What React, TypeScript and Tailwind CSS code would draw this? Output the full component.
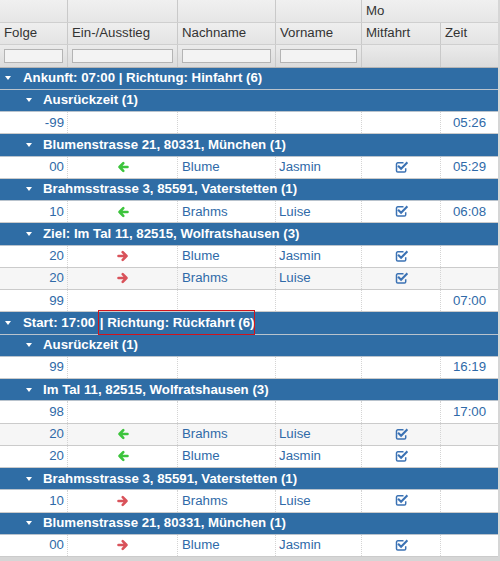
type Row =
  | { kind: "group"; level: 1 | 2; label: React.ReactNode }
  | {
      kind: "data";
      folge: string;
      dir?: "in" | "out";
      nach?: string;
      vor?: string;
      mit?: boolean;
      zeit?: string;
      odd?: boolean;
    };

const COLS = "grid-cols-[68px_110px_98px_86px_79px_57px]";

const rows: Row[] = [
  { kind: "group", level: 1, label: "Ankunft: 07:00 | Richtung: Hinfahrt (6)" },
  { kind: "group", level: 2, label: "Ausrückzeit (1)" },
  { kind: "data", folge: "-99", zeit: "05:26" },
  { kind: "group", level: 2, label: "Blumenstrasse 21, 80331, München (1)" },
  { kind: "data", folge: "00", dir: "in", nach: "Blume", vor: "Jasmin", mit: true, zeit: "05:29" },
  { kind: "group", level: 2, label: "Brahmsstrasse 3, 85591, Vaterstetten (1)" },
  { kind: "data", folge: "10", dir: "in", nach: "Brahms", vor: "Luise", mit: true, zeit: "06:08" },
  { kind: "group", level: 2, label: "Ziel: Im Tal 11, 82515, Wolfratshausen (3)" },
  { kind: "data", folge: "20", dir: "out", nach: "Blume", vor: "Jasmin", mit: true },
  { kind: "data", folge: "20", dir: "out", nach: "Brahms", vor: "Luise", mit: true, odd: true },
  { kind: "data", folge: "99", zeit: "07:00" },
  {
    kind: "group",
    level: 1,
    label: (
      <>
        <span className="whitespace-pre">Start: 17:00 </span>
        <span className="relative z-10 flex h-[23px] items-center whitespace-pre pl-[1px] ring-1 ring-[#d0141c]">
          | Richtung: Rückfahrt (6)
        </span>
      </>
    ),
  },
  { kind: "group", level: 2, label: "Ausrückzeit (1)" },
  { kind: "data", folge: "99", zeit: "16:19" },
  { kind: "group", level: 2, label: "Im Tal 11, 82515, Wolfratshausen (3)" },
  { kind: "data", folge: "98", zeit: "17:00" },
  { kind: "data", folge: "20", dir: "in", nach: "Brahms", vor: "Luise", mit: true, odd: true },
  { kind: "data", folge: "20", dir: "in", nach: "Blume", vor: "Jasmin", mit: true },
  { kind: "group", level: 2, label: "Brahmsstrasse 3, 85591, Vaterstetten (1)" },
  { kind: "data", folge: "10", dir: "out", nach: "Brahms", vor: "Luise", mit: true },
  { kind: "group", level: 2, label: "Blumenstrasse 21, 80331, München (1)" },
  { kind: "data", folge: "00", dir: "out", nach: "Blume", vor: "Jasmin", mit: true },
];

function Caret() {
  return (
    <span className="h-0 w-0 shrink-0 border-x-[3px] border-t-[4px] border-x-transparent border-t-white" />
  );
}

function Arrow({ dir }: { dir: "in" | "out" }) {
  return (
    <svg
      width="12"
      height="12"
      viewBox="0 0 12 12"
      className={dir === "in" ? "text-[#3cc43c]" : "-scale-x-100 text-[#d9525a]"}
      fill="none"
      stroke="currentColor"
      strokeWidth="2.6"
      strokeLinecap="round"
      strokeLinejoin="round"
    >
      <path d="M10.5 6H2.5M6.3 2.2L2.5 6l3.8 3.8" />
    </svg>
  );
}

function Check() {
  return (
    <svg width="13" height="12" viewBox="0 0 13 12" fill="none" stroke="#3b72b4" className="mb-[1px]">
      <path
        d="M8.5 1.8H2.8a1.3 1.3 0 0 0-1.3 1.3v6.6a1.3 1.3 0 0 0 1.3 1.3h6.6a1.3 1.3 0 0 0 1.3-1.3V7.3"
        strokeWidth="1.5"
      />
      <path d="M3.8 5.4l2.3 2.3 5.6-5.6" strokeWidth="2.1" strokeLinecap="square" />
    </svg>
  );
}

function GroupRow({ level, label }: { level: 1 | 2; label: React.ReactNode }) {
  return (
    <div
      className={`flex h-[22.25px] items-center border-b border-[#b9c3cd] bg-[#2f6da5] text-[13.25px] font-bold text-white ${
        level === 1 ? "gap-[12px] pl-[5px]" : "gap-[11px] pl-[26px]"
      }`}
    >
      <Caret />
      <span className="flex items-center whitespace-pre">{label}</span>
    </div>
  );
}

function DataRow({ r }: { r: Extract<Row, { kind: "data" }> }) {
  const cell = "flex items-center border-r border-dotted border-[#d4d4d4]";
  return (
    <div
      className={`grid ${COLS} h-[22.25px] border-b border-[#cbcbcb] text-[13.25px] text-[#2f6aa8] ${
        r.odd ? "bg-[#f6f6f6]" : "bg-white"
      }`}
    >
      <div className={`${cell} justify-end pr-[3px]`}>{r.folge}</div>
      <div className={`${cell} justify-center`}>{r.dir && <Arrow dir={r.dir} />}</div>
      <div className={`${cell} pl-[4px]`}>{r.nach}</div>
      <div className={`${cell} pl-[3px]`}>{r.vor}</div>
      <div className={`${cell} justify-center`}>{r.mit && <Check />}</div>
      <div className="flex items-center justify-center">{r.zeit}</div>
    </div>
  );
}

export default function App() {
  const hcell = "flex items-center border-r border-[#c9c9c9] pl-[4px]";
  return (
    <div className="h-[561px] w-[500px] overflow-hidden bg-[#d6d6d6] font-['Liberation_Sans',Arial,sans-serif]">
      <div className="w-[498px]">
        <div className={`grid ${COLS} h-[22.5px] border-b border-[#cfcfcf] bg-gradient-to-b from-[#f0f0f0] to-[#e6e6e6] text-[13.25px] text-[#333]`}>
          <div className={hcell} />
          <div className={hcell} />
          <div className={hcell} />
          <div className={hcell} />
          <div className="col-span-2 flex items-center pl-[4px]">Mo</div>
        </div>
        <div className={`grid ${COLS} h-[22.5px] border-b border-[#cfcfcf] bg-gradient-to-b from-[#eeeeee] to-[#e4e4e4] text-[13.25px] text-[#333]`}>
          <div className={hcell}>Folge</div>
          <div className={hcell}>Ein-/Ausstieg</div>
          <div className={hcell}>Nachname</div>
          <div className={hcell}>Vorname</div>
          <div className={hcell}>Mitfahrt</div>
          <div className="flex items-center pl-[4px]">Zeit</div>
        </div>
        <div className={`grid ${COLS} h-[22.5px] border-b border-[#b5b5b5] bg-gradient-to-b from-[#ebebeb] to-[#dcdcdc]`}>
          {[0, 1, 2, 3].map((i) => (
            <div key={i} className="flex items-center border-r border-[#c9c9c9] px-[4px]">
              <div className="h-[14px] w-full border border-[#b4b4b4] bg-[#f3f3f3]" />
            </div>
          ))}
          <div className="border-r border-[#c9c9c9]" />
          <div />
        </div>
        {rows.map((r, i) =>
          r.kind === "group" ? (
            <GroupRow key={i} level={r.level} label={r.label} />
          ) : (
            <DataRow key={i} r={r} />
          ),
        )}
      </div>
    </div>
  );
}
